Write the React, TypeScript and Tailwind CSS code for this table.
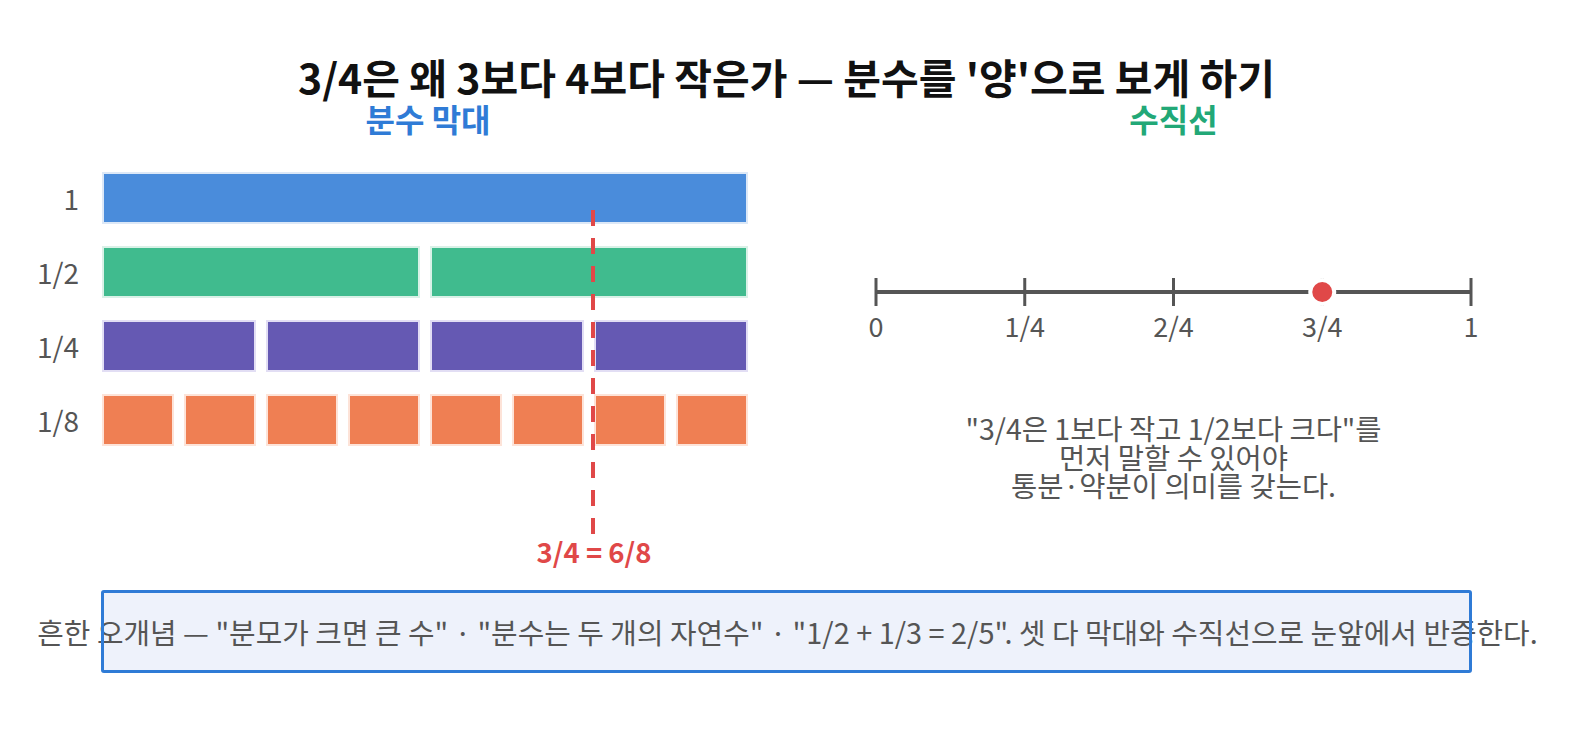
import React from "react";

const FONT = { fontFamily: '"Noto Sans CJK KR", "Noto Sans", sans-serif' };

type RowProps = { label: string; n: number; fill: string; border: string };

function BarRow({ label, n, fill, border }: RowProps) {
  return (
    <div className="flex h-[52px] items-center">
      <div className="w-[80px] pr-px text-right text-[28px] leading-none text-[#555555]">{label}</div>
      <div className="ml-[22px] flex h-[52px] w-[646px] gap-[10px]">
        {Array.from({ length: n }).map((_, i) => (
          <div key={i} className={`h-full flex-1 border-2 ${fill} ${border}`} />
        ))}
      </div>
    </div>
  );
}

export default function App() {
  const ticks = [17, 165.75, 314.5, 463.25, 612];
  const labels = ["0", "1/4", "2/4", "3/4", "1"];
  return (
    <div className="h-[749px] w-full overflow-hidden bg-white pt-[54px]" style={FONT}>
      <h1 className="text-center text-[41px] font-bold leading-[44px] text-[#111111]">
        3/4은 왜 3보다 4보다 작은가 — 분수를 '양'으로 보게 하기
      </h1>
      <div className="mt-[3px] flex h-[489px]">
        {/* left column: fraction bars */}
        <div className="flex w-[859px] flex-col">
          <h2 className="pr-[3px] text-center text-[32px] font-bold leading-[34px] text-[#2f7bd6]">분수 막대</h2>
          <div className="relative mt-[37px] flex flex-col gap-[22px]">
            <BarRow label="1" n={1} fill="bg-[#4a8cdb]" border="border-[#dce8f7]" />
            <BarRow label="1/2" n={2} fill="bg-[#40bb8e]" border="border-[#d9f1e7]" />
            <BarRow label="1/4" n={4} fill="bg-[#6559b3]" border="border-[#e2def4]" />
            <BarRow label="1/8" n={8} fill="bg-[#ef7f53]" border="border-[#fde3d8]" />
            <svg className="absolute left-[589px] top-[38px]" width="8" height="327" viewBox="0 0 8 327">
              <line x1="4" y1="0" x2="4" y2="327" stroke="#e04848" strokeWidth="4" strokeDasharray="16 12" />
            </svg>
            <div className="absolute left-[594px] top-[364px] -translate-x-1/2 whitespace-nowrap text-[27.5px] font-bold leading-[30px] text-[#e04848]">
              3/4 = 6/8
            </div>
          </div>
        </div>
        {/* right column: number line */}
        <div className="flex w-[629px] flex-col items-center">
          <h2 className="text-center text-[32px] font-bold leading-[34px] text-[#22a877]">수직선</h2>
          <svg className="mt-[125px]" width="629" height="90" viewBox="0 0 629 90">
            <line x1="17" y1="32" x2="612" y2="32" stroke="#555555" strokeWidth="4" />
            {ticks.map((x) => (
              <line key={x} x1={x} y1="18" x2={x} y2="46" stroke="#555555" strokeWidth="3" />
            ))}
            <circle cx="463.25" cy="32" r="12" fill="#e04848" stroke="#ffffff" strokeWidth="4" />
            {ticks.map((x, i) => (
              <text key={i} x={x} y="77" textAnchor="middle" fontSize="27" fill="#555555" style={FONT}>
                {labels[i]}
              </text>
            ))}
          </svg>
          <div className="mt-[64px] text-center text-[28.5px] leading-[28.5px] text-[#555555]">
            <p>"3/4은 1보다 작고 1/2보다 크다"를</p>
            <p>먼저 말할 수 있어야</p>
            <p>통분·약분이 의미를 갖는다.</p>
          </div>
        </div>
      </div>
      <div className="relative ml-[101px] flex h-[83px] w-[1371px] items-center justify-center rounded-[3px] bg-[#eef2fb] pl-[2px]">
        <p className="whitespace-nowrap text-[28.9px] leading-none text-[#555555]">
          흔한 오개념 — "분모가 크면 큰 수" · "분수는 두 개의 자연수" · "1/2 + 1/3 = 2/5". 셋 다 막대와 수직선으로 눈앞에서 반증한다.
        </p>
        <div className="pointer-events-none absolute inset-0 rounded-[3px] border-[3px] border-[#2f7bd6]" />
      </div>
    </div>
  );
}
